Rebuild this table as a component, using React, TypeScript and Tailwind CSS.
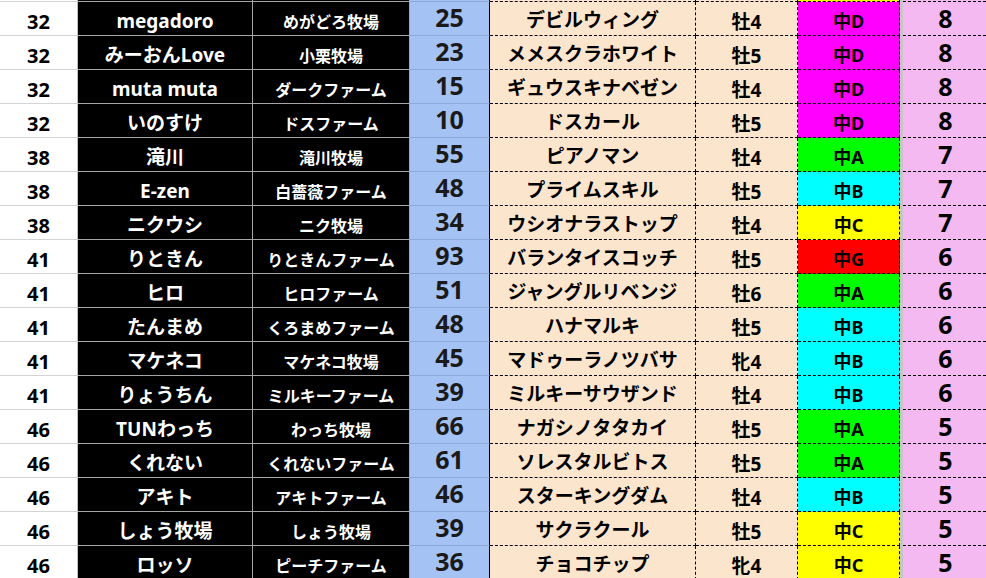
type Row = {
  rank: string;
  owner: string;
  farm: string;
  no: string;
  horse: string;
  sex: string;
  cls: string;
  color: string;
  pt: string;
};

// 中D / 中A ... の背景色
const CLASS_BG: Record<string, string> = {
  magenta: "bg-[#ff00ff]",
  green: "bg-[#00ff00]",
  cyan: "bg-[#00ffff]",
  yellow: "bg-[#ffff00]",
  red: "bg-[#ff0000]",
};

const rows: Row[] = [
  { rank: "32", owner: "megadoro", farm: "めがどろ牧場", no: "25", horse: "デビルウィング", sex: "牡4", cls: "中D", color: "magenta", pt: "8" },
  { rank: "32", owner: "みーおんLove", farm: "小栗牧場", no: "23", horse: "メメスクラホワイト", sex: "牡5", cls: "中D", color: "magenta", pt: "8" },
  { rank: "32", owner: "muta muta", farm: "ダークファーム", no: "15", horse: "ギュウスキナベゼン", sex: "牡4", cls: "中D", color: "magenta", pt: "8" },
  { rank: "32", owner: "いのすけ", farm: "ドスファーム", no: "10", horse: "ドスカール", sex: "牡5", cls: "中D", color: "magenta", pt: "8" },
  { rank: "38", owner: "滝川", farm: "滝川牧場", no: "55", horse: "ピアノマン", sex: "牡4", cls: "中A", color: "green", pt: "7" },
  { rank: "38", owner: "E-zen", farm: "白薔薇ファーム", no: "48", horse: "プライムスキル", sex: "牡5", cls: "中B", color: "cyan", pt: "7" },
  { rank: "38", owner: "ニクウシ", farm: "ニク牧場", no: "34", horse: "ウシオナラストップ", sex: "牡4", cls: "中C", color: "yellow", pt: "7" },
  { rank: "41", owner: "りときん", farm: "りときんファーム", no: "93", horse: "バランタイスコッチ", sex: "牡5", cls: "中G", color: "red", pt: "6" },
  { rank: "41", owner: "ヒロ", farm: "ヒロファーム", no: "51", horse: "ジャングルリベンジ", sex: "牡6", cls: "中A", color: "green", pt: "6" },
  { rank: "41", owner: "たんまめ", farm: "くろまめファーム", no: "48", horse: "ハナマルキ", sex: "牡5", cls: "中B", color: "cyan", pt: "6" },
  { rank: "41", owner: "マケネコ", farm: "マケネコ牧場", no: "45", horse: "マドゥーラノツバサ", sex: "牝4", cls: "中B", color: "cyan", pt: "6" },
  { rank: "41", owner: "りょうちん", farm: "ミルキーファーム", no: "39", horse: "ミルキーサウザンド", sex: "牡4", cls: "中B", color: "cyan", pt: "6" },
  { rank: "46", owner: "TUNわっち", farm: "わっち牧場", no: "66", horse: "ナガシノタタカイ", sex: "牡5", cls: "中A", color: "green", pt: "5" },
  { rank: "46", owner: "くれない", farm: "くれないファーム", no: "61", horse: "ソレスタルビトス", sex: "牡5", cls: "中A", color: "green", pt: "5" },
  { rank: "46", owner: "アキト", farm: "アキトファーム", no: "46", horse: "スターキングダム", sex: "牡4", cls: "中B", color: "cyan", pt: "5" },
  { rank: "46", owner: "しょう牧場", farm: "しょう牧場", no: "39", horse: "サクラクール", sex: "牡5", cls: "中C", color: "yellow", pt: "5" },
  { rank: "46", owner: "ロッソ", farm: "ピーチファーム", no: "36", horse: "チョコチップ", sex: "牝4", cls: "中C", color: "yellow", pt: "5" },
];

// Column cells: widths include the right border
const c1 = "w-[78px] shrink-0 bg-white border-r border-b border-r-[#bfbfbf] border-b-[#d4d4d4]";
const c2 = "w-[175px] shrink-0 bg-black border-r border-b border-[#a6a6a6]";
const c3 = "w-[157px] shrink-0 bg-black border-r border-b border-[#a6a6a6]";
const c4 = "w-[80px] shrink-0 bg-[#a4c2f4] border-r border-b border-r-black border-r-dashed border-b-[#8eaadc]";
const c5 = "w-[206px] shrink-0 bg-[#fce5cd] border-r border-b border-black border-dashed";
const c6 = "w-[102px] shrink-0 bg-[#fce5cd] border-r border-b border-black border-dashed";
const c7 = "w-[102px] shrink-0 border-r border-b border-black border-dashed";
const gap = "w-[3px] shrink-0 bg-[#c6c6c6]";
const c8 = "min-w-0 flex-1 bg-[#f4b9f1] border-b border-black border-dashed";

const cell = "flex items-center justify-center whitespace-nowrap";

function SheetRow({ r }: { r: Row }) {
  return (
    <div className="flex h-[34px]">
      <div className={`${c1} ${cell} pt-[7px] text-[20px] text-black`}>{r.rank}</div>
      <div className={`${c2} ${cell} pt-[5px] text-[19px] text-white`}>{r.owner}</div>
      <div className={`${c3} ${cell} pt-[7px] text-[16px] text-white`}>{r.farm}</div>
      <div className={`${c4} ${cell} pb-[2px] text-[25px] text-[#1a1a1a]`}>{r.no}</div>
      <div className={`${c5} ${cell} pt-[4px] text-[19px] text-black`}>{r.horse}</div>
      <div className={`${c6} ${cell} pt-[7px] text-[19px] text-black`}>{r.sex}</div>
      <div className={`${c7} ${CLASS_BG[r.color]} ${cell} pt-[6px] text-[18px] text-black`}>{r.cls}</div>
      <div className={gap} />
      <div className={`${c8} ${cell} pl-[2px] pt-[1px] text-[25px] text-black`}>{r.pt}</div>
    </div>
  );
}

export default function App() {
  return (
    <div
      className="h-[578px] w-[986px] overflow-hidden bg-white font-bold"
      style={{ fontFamily: '"Noto Sans", "Noto Sans CJK JP", sans-serif' }}
    >
      {/* tail of the row above */}
      <div className="flex h-[2px]">
        <div className={c1} />
        <div className={c2} />
        <div className={c3} />
        <div className={c4} />
        <div className={c5} />
        <div className={c6} />
        <div className={`${c7} bg-[#ffff00]`} />
        <div className={gap} />
        <div className={c8} />
      </div>
      {rows.map((r, i) => (
        <SheetRow key={i} r={r} />
      ))}
    </div>
  );
}
